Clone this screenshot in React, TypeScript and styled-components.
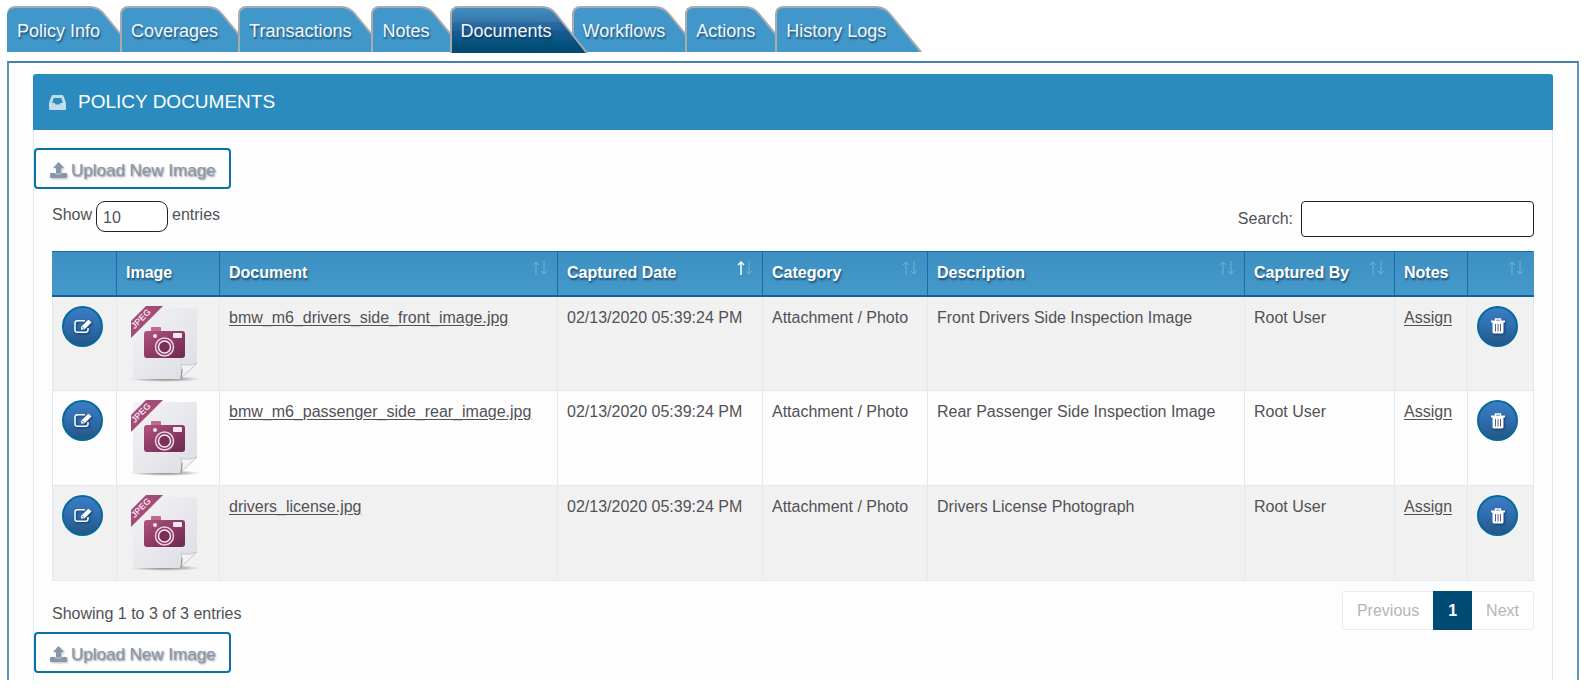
import React from "react";
import styled, { createGlobalStyle, css } from "styled-components";

const blue = "#4197c9";

const GlobalStyle = createGlobalStyle`
  *, *::before, *::after { box-sizing: border-box; }
  body {
    margin: 0;
    background: #ffffff;
    color: #515156;
    font: 16px/20px "Liberation Sans", Arial, sans-serif;
  }
  button, input, select { font: inherit; color: inherit; }
`;

const Page = styled.div`
  padding: 6px 8px 11px 7px;
`;

const Tabs = styled.nav`
  display: flex;
  height: 55px;
`;

const activeFill = css`
  background: linear-gradient(
    #3f93c4 0%, #3876ab 34%, #2a69a2 36%, #26639c 50%,
    #155c94 54%, #115789 72%, #04537f 76%, #034a70 100%
  );
`;

const Tab = styled.a<{ $active?: boolean }>`
  position: relative;
  flex: none;
  height: ${(p) => (p.$active ? 47 : 46)}px;
  margin-right: -16px;
  padding: 15px 36px 0 10px;
  z-index: ${(p) => (p.$active ? 1 : 0)};
  color: #f2f7fb;
  font-size: 18px;
  line-height: 20px;
  text-decoration: none;
  white-space: nowrap;
  text-shadow: 1px 2px 2px rgba(0, 30, 60, 0.6);

  & + & { padding-left: 11px; }

  &::before {
    content: "";
    position: absolute;
    z-index: -1;
    inset: 0 46px 0 0;
    border: solid #aaa9ad;
    border-width: 2px 0 0 2px;
    border-top-left-radius: 8px;
    background: ${blue};
    ${(p) => p.$active && activeFill}
    background-origin: border-box;
  }

  &:first-child::before { border-left-width: 0; }
`;

const TabSlope = styled.svg`
  position: absolute;
  z-index: -1;
  top: 0;
  right: 0;
  width: 46px;
  height: 100%;
`;

const Frame = styled.main`
  border: solid #6496b6;
  border-width: 2px 2px 0;
  border-top-color: #4580a5;
  background: #fdfdfd;
  padding: 11px 24px 0;
`;

const Panel = styled.section`
  border: 1px solid #dce9f5;
  border-width: 0 1px;
  padding-bottom: 7px;
`;

const PanelHeader = styled.header`
  display: flex;
  align-items: center;
  gap: 12px;
  height: 56px;
  margin: 0 -1px 18px;
  padding-left: 16px;
  border-radius: 3px 3px 0 0;
  background: #2b8bbf;
  color: #c3dced;
`;

const PanelTitle = styled.h1`
  margin: 0;
  color: #ffffff;
  font-size: 19px;
  font-weight: 400;
  line-height: 24px;
`;

const UploadButton = styled.button`
  display: flex;
  align-items: center;
  gap: 4px;
  height: 41px;
  padding: 4px 13px 0 14px;
  border: 2px solid #0b70a2;
  border-radius: 4px;
  background: #ffffff;
  color: #8797ab;
  font-size: 17px;
  white-space: nowrap;
  text-shadow: 1px 1px 2px rgba(80, 80, 90, 0.7);
  svg { filter: drop-shadow(1px 1px 1px rgba(80, 80, 90, 0.4)); }
`;

const Body = styled.div`
  padding: 0 18px;
`;

const Controls = styled.div`
  display: flex;
  justify-content: space-between;
  align-items: flex-start;
  height: 62px;
  padding-top: 12px;
`;

const LengthLabel = styled.label`
  display: flex;
  gap: 4px;
  line-height: 28px;
`;

const LengthSelect = styled.select`
  width: 72px;
  height: 31px;
  padding: 2px 6px 0;
  border: 1px solid #222222;
  border-radius: 9px;
  background: #ffffff;
  appearance: none;
`;

const SearchLabel = styled.label`
  display: flex;
  align-items: center;
  gap: 8px;
`;

const SearchInput = styled.input`
  width: 233px;
  height: 36px;
  padding: 0 8px;
  border: 1px solid #222222;
  border-radius: 4px;
  background: #ffffff;
`;

const Table = styled.table`
  width: 100%;
  table-layout: fixed;
  border-collapse: collapse;
`;

const Col = styled.col<{ $width?: number }>`
  width: ${(p) => (p.$width ? p.$width + "px" : "auto")};
`;

const HeadRow = styled.tr`
  height: 44px;
  background: linear-gradient(#3c90c2, #4599ca);
`;

const HeadCell = styled.th`
  padding: 0 9px;
  border: 1px solid #1b69a8;
  border-bottom: 2px solid #1260a3;
  &:first-child { border-left-color: ${blue}; }
  &:last-child { border-right-color: ${blue}; }
`;

const HeadInner = styled.div`
  display: flex;
  justify-content: space-between;
  min-height: 20px;
  color: #ffffff;
  text-align: left;
  white-space: nowrap;
  text-shadow: 1px 2px 2px rgba(0, 30, 60, 0.6);
`;

const SortIcon = styled.svg`
  flex: none;
  width: 16px;
  height: 16px;
  margin-top: -3px;
`;

const Row = styled.tr`
  height: 95px;
  background: #fdfdfd;
  &:nth-child(odd) { background: #f1f1f1; }
`;

const Cell = styled.td`
  padding: 11px 9px 0;
  border: 1px solid #dfe9f3;
  vertical-align: top;
  white-space: nowrap;
`;

const MediaCell = styled(Cell)`
  padding-top: 9px;
`;

const ImageCell = styled(MediaCell)`
  padding-left: 12px;
`;

const CellLink = styled.a`
  color: inherit;
  text-underline-offset: 2px;
`;

const RoundButton = styled.button`
  display: flex;
  align-items: center;
  justify-content: center;
  width: 41px;
  height: 41px;
  padding: 0;
  border: 2px solid #06699b;
  border-radius: 50%;
  background: linear-gradient(#3a7dc4, #2f6dae 50%, #245687);
  color: #ffffff;
  svg { filter: drop-shadow(1px 1px 1px rgba(0, 20, 50, 0.6)); }
`;

const Thumb = styled.svg`
  display: block;
  width: 72px;
  height: 78px;
`;

const Footer = styled.footer`
  display: flex;
  justify-content: space-between;
  height: 51px;
  padding-top: 10px;
`;

const Info = styled.p`
  margin: 13px 0 0;
`;

const Pager = styled.nav`
  display: flex;
  height: 39px;
`;

const PageButton = styled.button<{ $current?: boolean }>`
  padding: 0 14px;
  border: 1px solid #ececee;
  background: #ffffff;
  color: #b5b5b8;
  &:first-child { border-radius: 4px 0 0 4px; border-right: 0; }
  &:last-child { border-radius: 0 4px 4px 0; border-left: 0; }
  ${(p) =>
    p.$current &&
    css`
      border-color: #004b74;
      background: #004b74;
      color: #ffffff;
      font-weight: 700;
    `}
`;

const tabs = ["Policy Info", "Coverages", "Transactions", "Notes", "Documents", "Workflows", "Actions", "History Logs"];

function NavTab({ label, active }: { label: string; active?: boolean }) {
  const h = active ? 47 : 46;
  return (
    <Tab href="#" $active={active} aria-current={active ? "page" : undefined}>
      {label}
      <TabSlope viewBox={`0 0 46 ${h}`} aria-hidden="true">
        <defs>
          <linearGradient id="active-tab" x1="0" y1="0" x2="0" y2={h} gradientUnits="userSpaceOnUse">
            <stop offset="0" stopColor="#3f93c4" />
            <stop offset=".34" stopColor="#3876ab" />
            <stop offset=".36" stopColor="#2a69a2" />
            <stop offset=".5" stopColor="#26639c" />
            <stop offset=".54" stopColor="#155c94" />
            <stop offset=".72" stopColor="#115789" />
            <stop offset=".76" stopColor="#04537f" />
            <stop offset="1" stopColor="#034a70" />
          </linearGradient>
        </defs>
        <path d={`M0 1C6 1 10 3 14 8L45 ${h}H0Z`} fill={active ? "url(#active-tab)" : blue} />
        <path d={`M0 1C6 1 10 3 14 8L45 ${h}`} fill="none" stroke="#aaa9ad" strokeWidth="2" />
      </TabSlope>
    </Tab>
  );
}

function Sort({ asc }: { asc?: boolean }) {
  return (
    <SortIcon viewBox="0 0 16 16" fill="none" aria-hidden="true">
      <path d="M4 15V2M1 5L4 2L7 5" stroke={asc ? "#ffffff" : "#74b1d8"} strokeWidth={asc ? 1.5 : 1} />
      <path d="M12 1V14M9 11L12 14L15 11" stroke="#74b1d8" strokeWidth="1" />
    </SortIcon>
  );
}

function InboxIcon() {
  return (
    <svg width="17" height="15" viewBox="0 0 17 15" aria-hidden="true">
      <path fill="currentColor" fillRule="evenodd" d="M3.6 0H13.4L14.5 1L17 8V14Q17 15 16 15H1Q0 15 0 14V8L2.5 1ZM4.600 3L3.200 8H5.600L6.600 9.600H10.400L11.400 8H13.800L12.400 3Z" />
    </svg>
  );
}

function UploadIcon() {
  return (
    <svg width="17" height="17" viewBox="0 0 17 17" fill="currentColor" aria-hidden="true">
      <path d="M8.500 0L14 6H11V11.500H6V6H3Z" />
      <path d="M1 11H5Q5.300 12.400 7 12.400H10Q11.700 12.400 12 11H16Q17 11 17 12V15Q17 16 16 16H1Q0 16 0 15V12Q0 11 1 11Z" />
    </svg>
  );
}

function EditIcon() {
  return (
    <svg width="18" height="15" viewBox="0 0 18 15" fill="none" aria-hidden="true">
      <path d="M11 1.750H3.500Q1 1.750 1 4V11Q1 13.250 3.500 13.250H11.500Q14 13.250 14 11V9" stroke="currentColor" strokeWidth="1.500" />
      <path d="M7 8L14 1L15 1L17.500 3.500L10.500 10.500H7Z" fill="currentColor" />
      <path d="M8 7.800L10 9.800" stroke="#2f6dae" />
    </svg>
  );
}

function TrashIcon() {
  return (
    <svg width="14" height="16" viewBox="0 0 14 16" fill="none" aria-hidden="true">
      <path d="M4.500 3V1H9.500V3" stroke="currentColor" strokeWidth="1.500" />
      <path d="M0 2.500H14V4.500H0ZM1.500 4.500H12.500V14Q12.500 15.500 11 15.500H3Q1.500 15.500 1.500 14Z" fill="currentColor" />
      <path d="M4.500 6V13.500M7 6V13.500M9.500 6V13.500" stroke="#5a5a90" />
    </svg>
  );
}

function JpegThumb() {
  return (
    <Thumb viewBox="0 0 72 78" role="img" aria-label="JPEG image">
      <defs>
        <linearGradient id="paper" x1="0" y1="0" x2="1" y2="1">
          <stop offset="0" stopColor="#f4f4f6" />
          <stop offset="1" stopColor="#dcdce4" />
        </linearGradient>
        <linearGradient id="body" x1="0" y1="0" x2="1" y2="1">
          <stop offset="0" stopColor="#b0567f" />
          <stop offset=".5" stopColor="#8f3966" />
          <stop offset="1" stopColor="#6b2a50" />
        </linearGradient>
        <radialGradient id="shade">
          <stop offset="0" stopColor="#888" />
          <stop offset=".6" stopColor="#aaa" stopOpacity=".7" />
          <stop offset="1" stopColor="#bbb" stopOpacity="0" />
        </radialGradient>
      </defs>
      <ellipse cx="36" cy="73" rx="36" ry="3" fill="url(#shade)" />
      <path d="M4 4Q4 2 6 2H66Q68 2 68 4V57L51 73H6Q4 73 4 71Z" fill="url(#paper)" />
      <path d="M51 73C54 69 53 63 52 58C57 60 63 59 68 57Z" fill="#f3f3f6" stroke="#c4c4cc" />
      <path d="M52 73L53 63" stroke="#8e8e96" />
      <path d="M17 0H34L2 32V15Z" fill="#a34c78" />
      <text x="14" y="15" transform="rotate(-45 14 15)" textAnchor="middle" fontSize="9" fontWeight="700" fill="#f0dde7">JPEG</text>
      <rect x="22" y="21" width="10" height="6" rx="1" fill="#ba6c91" />
      <rect x="15" y="25" width="41" height="27" rx="3" fill="url(#body)" />
      <circle cx="26" cy="30" r="2" fill="#f5e8ef" />
      <rect x="44" y="27" width="9" height="5" rx="1" fill="#f5e8ef" />
      <circle cx="35.500" cy="41" r="9" fill="#8f3966" stroke="#e9d3df" strokeWidth="1.500" />
      <circle cx="35.500" cy="41" r="6" fill="#7a2f59" stroke="#f7edf2" strokeWidth="1.500" />
    </Thumb>
  );
}

const columns: { label: string; name: string; width?: number; sort?: "none" | "asc" }[] = [
  { label: "", name: "edit", width: 64 },
  { label: "Image", name: "image", width: 103 },
  { label: "Document", name: "document", width: 338, sort: "none" },
  { label: "Captured Date", name: "date", width: 205, sort: "asc" },
  { label: "Category", name: "category", width: 165, sort: "none" },
  { label: "Description", name: "description", sort: "none" },
  { label: "Captured By", name: "user", width: 150, sort: "none" },
  { label: "Notes", name: "notes", width: 73 },
  { label: "", name: "delete", width: 66, sort: "none" },
];

const documents = [
  { file: "bmw_m6_drivers_side_front_image.jpg", description: "Front Drivers Side Inspection Image" },
  { file: "bmw_m6_passenger_side_rear_image.jpg", description: "Rear Passenger Side Inspection Image" },
  { file: "drivers_license.jpg", description: "Drivers License Photograph" },
];

function Upload() {
  return (
    <UploadButton type="button">
      <UploadIcon />
      Upload New Image
    </UploadButton>
  );
}

export default function App() {
  return (
    <Page>
      <GlobalStyle />
      <Tabs>
        {tabs.map((t) => (
          <NavTab key={t} label={t} active={t === "Documents"} />
        ))}
      </Tabs>
      <Frame>
        <Panel>
          <PanelHeader>
            <InboxIcon />
            <PanelTitle>POLICY DOCUMENTS</PanelTitle>
          </PanelHeader>
          <Upload />
          <Body>
            <Controls>
              <LengthLabel>
                Show
                <LengthSelect defaultValue="10">
                  <option>10</option>
                  <option>25</option>
                  <option>50</option>
                </LengthSelect>
                entries
              </LengthLabel>
              <SearchLabel>
                Search:
                <SearchInput type="search" />
              </SearchLabel>
            </Controls>
            <Table>
              <colgroup>
                {columns.map((c) => (
                  <Col key={c.name} $width={c.width} />
                ))}
              </colgroup>
              <thead>
                <HeadRow>
                  {columns.map((c) => (
                    <HeadCell key={c.name} scope="col">
                      <HeadInner>
                        <span>{c.label}</span>
                        {c.sort && <Sort asc={c.sort === "asc"} />}
                      </HeadInner>
                    </HeadCell>
                  ))}
                </HeadRow>
              </thead>
              <tbody>
                {documents.map((d) => (
                  <Row key={d.file}>
                    <MediaCell>
                      <RoundButton type="button" aria-label={`Edit ${d.file}`}>
                        <EditIcon />
                      </RoundButton>
                    </MediaCell>
                    <ImageCell>
                      <JpegThumb />
                    </ImageCell>
                    <Cell>
                      <CellLink href="#">{d.file}</CellLink>
                    </Cell>
                    <Cell>02/13/2020 05:39:24 PM</Cell>
                    <Cell>Attachment / Photo</Cell>
                    <Cell>{d.description}</Cell>
                    <Cell>Root User</Cell>
                    <Cell>
                      <CellLink href="#">Assign</CellLink>
                    </Cell>
                    <MediaCell>
                      <RoundButton type="button" aria-label={`Delete ${d.file}`}>
                        <TrashIcon />
                      </RoundButton>
                    </MediaCell>
                  </Row>
                ))}
              </tbody>
            </Table>
            <Footer>
              <Info>Showing 1 to 3 of 3 entries</Info>
              <Pager aria-label="Pagination">
                <PageButton type="button">Previous</PageButton>
                <PageButton type="button" $current>1</PageButton>
                <PageButton type="button">Next</PageButton>
              </Pager>
            </Footer>
          </Body>
          <Upload />
        </Panel>
      </Frame>
    </Page>
  );
}
